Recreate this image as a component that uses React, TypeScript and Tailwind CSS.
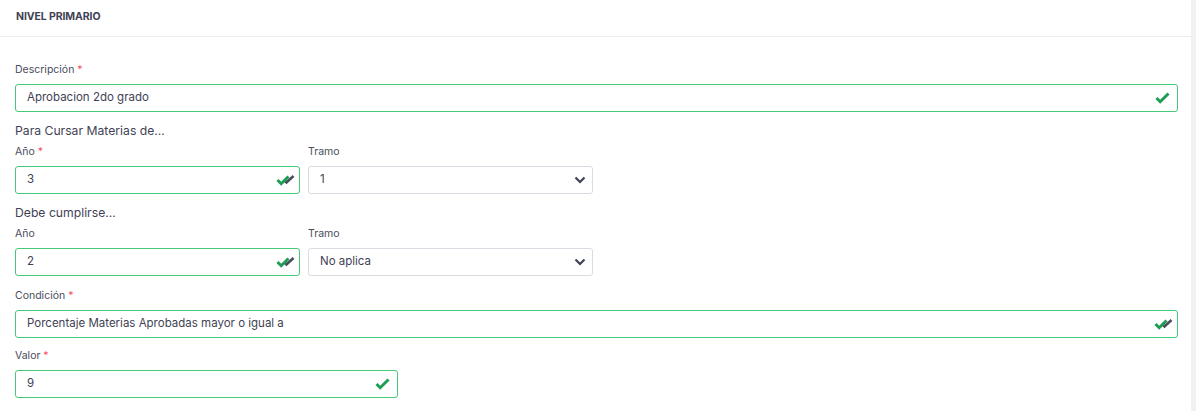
import React from "react";

const SingleCheck = () => (
  <svg width="15" height="13" viewBox="0 0 15 13" className="absolute right-[7px] top-1/2 -translate-y-1/2">
    <path d="M1.5 6.5 L5.2 10.2 L13.5 2" stroke="#1f9d55" strokeWidth="3" fill="none" />
  </svg>
);

const DoubleCheck = () => (
  <svg width="19" height="13" viewBox="0 0 19 13" className="absolute right-[4px] top-1/2 -translate-y-1/2">
    <path d="M8 6.5 L10.5 9 L17.5 2.5" stroke="#4b4f5c" strokeWidth="2.6" fill="none" />
    <path d="M1.5 6.5 L5.2 10.2 L12.5 3" stroke="#1f9d55" strokeWidth="3" fill="none" />
  </svg>
);

const Label = ({ text, req, mb = "mb-[7px]" }: { text: string; req?: boolean; mb?: string }) => (
  <div className={`text-[10.5px] leading-[14px] text-[#4a4d5c] ${mb}`}>
    {text}
    {req && <span className="text-[#f64e60]"> *</span>}
  </div>
);

const Input = ({ value, w, double }: { value: string; w: string; double?: boolean }) => (
  <div className={`relative h-[28px] ${w} border border-[#45c878] rounded-[3px] flex items-center pl-[11px] text-[11.5px] text-[#3f4254]`}>
    {value}
    {double ? <DoubleCheck /> : <SingleCheck />}
  </div>
);

const Select = ({ value }: { value: string }) => (
  <div className="relative h-[28px] w-[285px] border border-[#d9dbe3] rounded-[3px] flex items-center pl-[11px] text-[11.5px] text-[#3f4254]">
    {value}
    <svg width="12" height="8" viewBox="0 0 12 8" className="absolute right-[6px] top-1/2 -translate-y-1/2">
      <path d="M1.5 1.5 L6 6 L10.5 1.5" stroke="#3f4254" strokeWidth="2.2" fill="none" />
    </svg>
  </div>
);

export default function App() {
  return (
    <div className="w-[1196px] h-[411px] bg-white flex font-['Inter',sans-serif] overflow-hidden">
      <div className="w-[1191px]">
        <div className="h-[37px] border-b border-[#ebedf3] flex items-center pl-[16px] pb-[2px]">
          <span className="text-[10.5px] font-bold text-[#3f4254] tracking-[-0.1px]">NIVEL PRIMARIO</span>
        </div>
        <div className="pl-[15px] pt-[26px]">
          <Label text="Descripción" req />
          <Input value="Aprobacion 2do grado" w="w-[1163px]" />
          <div className="mt-[11px] text-[12.2px] leading-[16px] text-[#3f4254] mb-[6px]">Para Cursar Materias de...</div>
          <div className="flex gap-[8px]">
            <div>
              <Label text="Año" req />
              <Input value="3" w="w-[285px]" double />
            </div>
            <div>
              <Label text="Tramo" />
              <Select value="1" />
            </div>
          </div>
          <div className="mt-[11px] text-[12.2px] leading-[16px] text-[#3f4254] mb-[6px]">Debe cumplirse...</div>
          <div className="flex gap-[8px]">
            <div>
              <Label text="Año" />
              <Input value="2" w="w-[285px]" double />
            </div>
            <div>
              <Label text="Tramo" />
              <Select value="No aplica" />
            </div>
          </div>
          <div className="mt-[13px]">
            <Label text="Condición" req />
            <Input value="Porcentaje Materias Aprobadas mayor o igual a" w="w-[1163px]" double />
          </div>
          <div className="mt-[11px]">
            <Label text="Valor" req />
            <Input value="9" w="w-[383px]" />
          </div>
        </div>
      </div>
      <div className="flex-1 bg-[#f1f1f3]" />
    </div>
  );
}
